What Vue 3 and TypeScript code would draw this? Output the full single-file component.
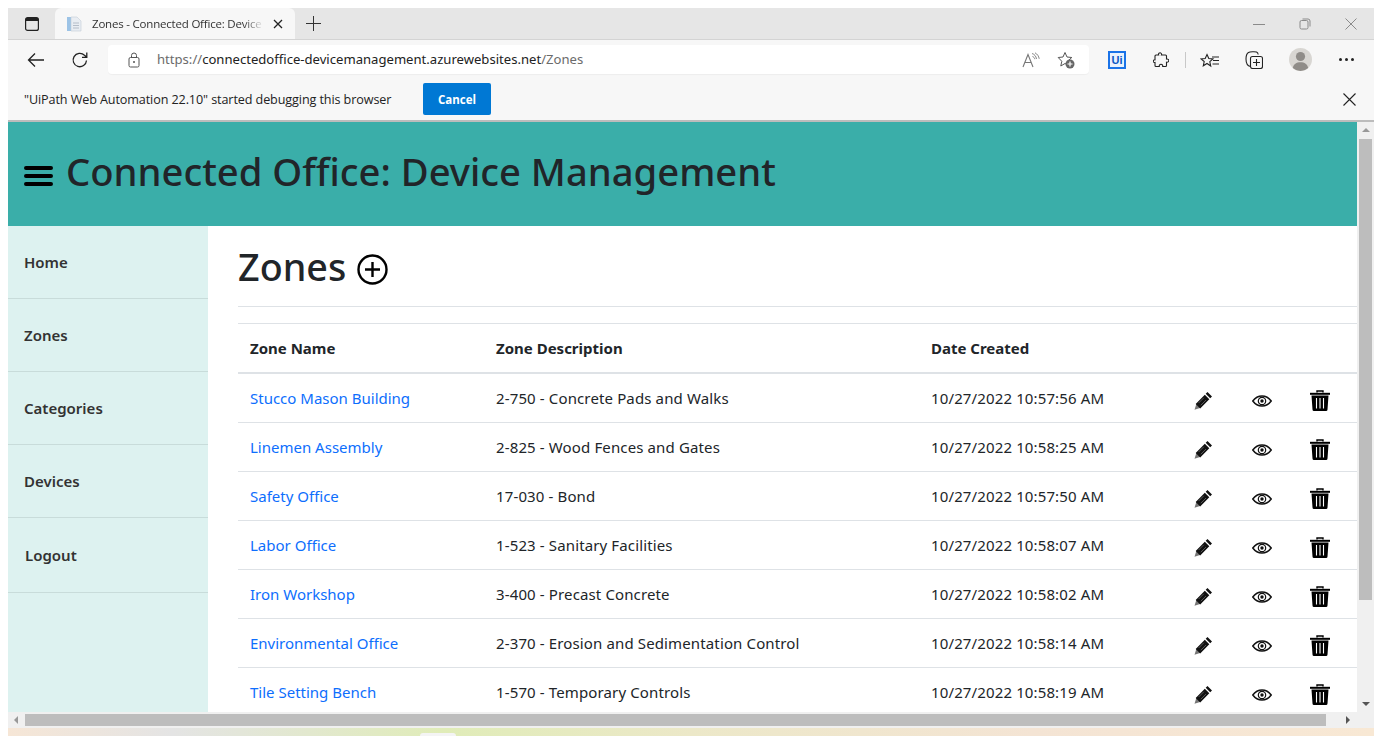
<script setup lang="ts">
interface Zone { name: string; desc: string; date: string }
const zones: Zone[] = [
  { name: 'Stucco Mason Building', desc: '2-750 - Concrete Pads and Walks', date: '10/27/2022 10:57:56 AM' },
  { name: 'Linemen Assembly', desc: '2-825 - Wood Fences and Gates', date: '10/27/2022 10:58:25 AM' },
  { name: 'Safety Office', desc: '17-030 - Bond', date: '10/27/2022 10:57:50 AM' },
  { name: 'Labor Office', desc: '1-523 - Sanitary Facilities', date: '10/27/2022 10:58:07 AM' },
  { name: 'Iron Workshop', desc: '3-400 - Precast Concrete', date: '10/27/2022 10:58:02 AM' },
  { name: 'Environmental Office', desc: '2-370 - Erosion and Sedimentation Control', date: '10/27/2022 10:58:14 AM' },
  { name: 'Tile Setting Bench', desc: '1-570 - Temporary Controls', date: '10/27/2022 10:58:19 AM' },
]
const nav: string[] = ['Home', 'Zones', 'Categories', 'Devices']
</script>

<template>
  <div class="frame">
    <div class="window">
      <div class="tabstrip">
        <svg class="tabs-ico" width="14" height="14" viewBox="0 0 14 14"><rect x="0.6" y="0.6" width="12.8" height="12.8" rx="2" fill="none" stroke="#222" stroke-width="1.2"/><path d="M1 1h12v3H1z" fill="#222"/></svg>
        <div class="tab">
          <svg class="favicon" width="16" height="16" viewBox="0 0 16 16"><rect x="1" y="1" width="4" height="14" fill="#9cc3e6"/><path d="M5 1h6l4 4v10H5z" fill="#e9edf2" stroke="#c4ccd6" stroke-width=".6"/><path d="M7 7h6M7 9.500h6M7 12h6" stroke="#b5bdc8"/></svg>
          <span class="tab-title">Zones - Connected Office: Device</span>
          <svg class="tab-x" width="10" height="10" viewBox="0 0 10 10"><path d="M1 1l8 8M9 1l-8 8" stroke="#222" stroke-width="1.300"/></svg>
        </div>
        <svg class="plus" width="15" height="15" viewBox="0 0 15 15"><path d="M7.500 0v15M0 7.500h15" stroke="#333" stroke-width="1"/></svg>
        <div class="winbtns">
          <div class="winbtn"><svg width="12" height="12" viewBox="0 0 12 12"><path d="M0 6.500h12" stroke="#8a8a8a"/></svg></div>
          <div class="winbtn"><svg width="12" height="12" viewBox="0 0 12 12"><rect x="1" y="2.500" width="8" height="8.500" rx="1.500" fill="none" stroke="#8a8a8a"/><path d="M3.500 1h5.500a2 2 0 0 1 2 2v5.500" fill="none" stroke="#8a8a8a"/></svg></div>
          <div class="winbtn"><svg width="12" height="12" viewBox="0 0 12 12"><path d="M.5.500l11 11M11.500.500l-11 11" stroke="#8a8a8a"/></svg></div>
        </div>
      </div>

      <div class="toolbar">
        <svg class="back" width="18" height="16" viewBox="0 0 18 16"><path d="M17 8H1.500M8 1.500L1.500 8 8 14.500" fill="none" stroke="#222" stroke-width="1.300"/></svg>
        <svg class="reload" width="18" height="18" viewBox="0 0 18 18"><path d="M15.500 9.500a6.700 6.700 0 1 1-2-5.300l2 1.800M15.800 1.500V6.300H11" fill="none" stroke="#222" stroke-width="1.300"/></svg>
        <div class="urlbox">
          <svg class="lock" width="12" height="16" viewBox="0 0 12 16"><rect x="1" y="5.500" width="10" height="9.500" rx="1.500" fill="none" stroke="#555"/><path d="M3.500 5.500V3.500a2.500 2.500 0 0 1 5 0v2" fill="none" stroke="#555"/><circle cx="6" cy="10" r="1" fill="#555"/></svg>
          <span class="url"><span class="dim">https://</span>connectedoffice-devicemanagement.azurewebsites.net<span class="dim">/Zones</span></span>
          <svg class="read" width="18" height="16" viewBox="0 0 18 16"><path d="M1 15L6 2.500 11 15M2.800 10.500h6.400" fill="none" stroke="#777" stroke-width="1.100"/><path d="M10 1.500c2.500.8 4 2.600 4.500 5.500M10.500 4.500c1.300.4 2 1.300 2.300 2.700M13 .8c2.300 1.300 3.800 3.300 4.200 6" fill="none" stroke="#777" stroke-width=".9"/></svg>
          <svg class="fav" width="18" height="18" viewBox="0 0 18 18"><path d="M8 1.500l2 4.500 4.800.500-3.600 3.200 1 4.700L8 12.500 3.800 15l1-4.700L1.200 6.500 6 6z" fill="none" stroke="#555" stroke-width="1"/><circle cx="13" cy="13" r="4.500" fill="#666"/><path d="M13 10.500v5M10.500 13h5" stroke="#fff" stroke-width="1.200"/></svg>
        </div>
        <div class="ui-badge"><span>Ui</span></div>
        <svg class="puzzle" width="16" height="16" viewBox="0 0 16 16"><path d="M6 1.200c1-.8 2.500-.3 2.600 1 0 .4 0 .6-.1.800H12.500a1 1 0 0 1 1 1v3c1.500-.3 2.300.6 2.300 1.600s-1 2-2.300 1.600v3.300a1 1 0 0 1-1 1H9.700c.3-1.500-.6-2.300-1.700-2.300s-2 .8-1.700 2.300H3a1 1 0 0 1-1-1v-3c-1.600.3-2-1-1.500-2 .3-.6 1-.8 1.500-.7V4a1 1 0 0 1 1-1h2.600c-.2-.6 0-1.400.4-1.800z" fill="none" stroke="#222" stroke-width="1.100"/></svg>
        <div class="sep"></div>
        <svg class="star" width="20" height="16" viewBox="0 0 20 16"><path d="M7 1.500l1.800 4 4.200.400-3.200 2.800.9 4.300L7 10.500 3.300 12.800l.9-4.300L1 5.900l4.200-.400z" fill="none" stroke="#222" stroke-width="1.100" transform="translate(0 1)"/><path d="M12 5h7M13 8.500h6M12.500 12h6.500" stroke="#222" stroke-width="1.100"/></svg>
        <svg class="coll" width="18" height="18" viewBox="0 0 18 18"><path d="M5.500 15.500C3 15 1 12 1 8c0-3 .8-5.500 2.500-6.500 1.500-.8 6.500-1 8-.5 1 .4 1.500 1.200 1.700 2.500" fill="none" stroke="#222" stroke-width="1.100"/><rect x="5.500" y="5.500" width="12" height="12" rx="2" fill="#f7f7f7" stroke="#222" stroke-width="1.100"/><path d="M11.500 8v7M8 11.500h7" stroke="#222" stroke-width="1.100"/></svg>
        <svg class="avatar" width="23" height="23" viewBox="0 0 23 23"><circle cx="11.500" cy="11.500" r="11.500" fill="#d8d6d2"/><circle cx="11.500" cy="8.500" r="4.600" fill="#8f8c88"/><path d="M3.800 20c.6-4 3.600-5.800 7.700-5.800s7 1.800 7.700 5.800a11.500 11.500 0 0 1-15.400 0z" fill="#8f8c88"/></svg>
        <div class="dots"><i></i><i></i><i></i></div>
      </div>

      <div class="infobar">
        <span class="info-text">"UiPath Web Automation 22.10" started debugging this browser</span>
        <button class="cancel">Cancel</button>
        <svg class="info-x" width="13" height="13" viewBox="0 0 13 13"><path d="M.5.500l12 12M12.500.500l-12 12" stroke="#222" stroke-width="1.100"/></svg>
      </div>

      <div class="viewport">
        <div class="page">
          <header class="hero">
            <svg class="burger" width="29" height="20" viewBox="0 0 29 20"><path d="M2 2h25M2 10h25M2 18h25" stroke="#000" stroke-width="4" stroke-linecap="round"/></svg>
            <h1 class="hero-title">Connected Office: Device Management</h1>
          </header>
          <div class="body">
            <aside class="side">
              <a v-for="item in nav" :key="item" class="side-item">{{ item }}</a>
              <a class="side-item logout">Logout</a>
            </aside>
            <main class="content">
              <div class="heading">
                <h2 class="h-title">Zones</h2>
                <svg class="h-plus" width="31" height="31" viewBox="0 0 31 31"><circle cx="15.500" cy="15.500" r="14" fill="none" stroke="#000" stroke-width="2.400"/><path d="M15.500 8v15M8 15.500h15" stroke="#000" stroke-width="2.400"/></svg>
              </div>
              <table class="grid">
                <colgroup>
                  <col class="c1" /><col class="c2" /><col class="c3" /><col class="c4" /><col class="c4" /><col class="c4" /><col class="c5" />
                </colgroup>
                <thead>
                  <tr><th>Zone Name</th><th>Zone Description</th><th>Date Created</th><th></th><th></th><th></th><th></th></tr>
                </thead>
                <tbody>
                  <tr v-for="z in zones" :key="z.name">
                    <td><a class="link">{{ z.name }}</a></td>
                    <td class="wide">{{ z.desc }}</td>
                    <td class="wide">{{ z.date }}</td>
                    <td class="ico">
                      <svg width="20" height="20" viewBox="0 0 20 20"><path d="M3.500 12.500L1.500 18.800l6.300-2z" fill="#777"/><path d="M14.500 1l4.500 4.500-1.800 1.800-4.500-4.500zM11.800 3.800l4.500 4.500L7.200 17.400 2.700 12.900z" fill="#111"/><path d="M10.800 6.800l-5.200 5.200M13 9l-5.200 5.200" stroke="#777" stroke-width=".7"/></svg>
                    </td>
                    <td class="ico eye">
                      <svg width="20" height="14" viewBox="0 0 20 14"><path d="M.8 7C3 4 6.200 2 10 2s7 2 9.200 5C17 10 13.800 12 10 12S3 10 .8 7z" fill="none" stroke="#111" stroke-width="1.500"/><circle cx="10" cy="7" r="3.700" fill="none" stroke="#111" stroke-width="1.200"/><circle cx="10" cy="7" r="1.700" fill="#111"/></svg>
                    </td>
                    <td class="ico">
                      <svg width="20" height="21" viewBox="0 0 20 21"><path d="M7 2.500V1h6v1.500" fill="none" stroke="#000" stroke-width="1.400"/><path d="M0 2.800h20v2H0z" fill="#000"/><path d="M1.500 5.500h17L17.500 19.500a1.500 1.500 0 0 1-1.500 1.500H4a1.500 1.500 0 0 1-1.500-1.500z" fill="#000"/><path d="M6.500 8v10.500M10 8v10.500M13.500 8v10.500" stroke="#fff" stroke-width="1.100"/></svg>
                    </td>
                    <td></td>
                  </tr>
                </tbody>
              </table>
            </main>
          </div>
        </div>
        <div class="vbar">
          <div class="arrow-up"></div>
          <div class="vthumb"></div>
          <div class="arrow-down"></div>
        </div>
      </div>

      <div class="hbar">
        <div class="arrow-left"></div>
        <div class="hthumb"></div>
        <div class="arrow-right"></div>
      </div>
    </div>
    <div class="wallpaper"><div class="wall-chip"></div></div>
  </div>
</template>

<style scoped>
.frame {
  width: 1382px;
  height: 736px;
  box-sizing: border-box;
  padding: 8px 8px 0;
  background: #fff;
  display: flex;
  flex-direction: column;
  overflow: hidden;
  font-family: "Noto Sans", "Open Sans", sans-serif;
  color: #212529;
}
.window {
  height: 720px;
  display: flex;
  flex-direction: column;
  overflow: hidden;
}
.wallpaper {
  height: 8px;
  flex: none;
  background: linear-gradient(90deg, #f6e6d6 0%, #e4e4e4 12%, #e0ecb8 32%, #ece8c8 50%, #f4e4d4 75%, #f8e8d4 100%);
  padding: 5px 0 0 412px;
  box-sizing: border-box;
}
.wall-chip { width: 36px; height: 3px; background: #f4f4f4; border-radius: 3px 3px 0 0; }

.tabstrip {
  height: 32px;
  flex: none;
  background: #e6e6e6;
  display: flex;
  align-items: center;
  border-bottom: 1px solid #d4d4d4;
  box-sizing: border-box;
}
.tabs-ico { margin-left: 17px; }
.tab {
  margin-left: 16px;
  width: 240px;
  height: 31px;
  margin-top: 0;
  background: #f7f7f7;
  border-radius: 6px 6px 0 0;
  display: flex;
  align-items: center;
  box-sizing: border-box;
  padding-left: 11px;
  font-size: 12px;
  color: #333;
}
.favicon { flex: none; }
.tab-title {
  margin-left: 10px;
  flex: none;
  white-space: nowrap;
  font-family: "Open Sans", sans-serif;
  font-size: 11.500px;
  letter-spacing: -0.2px;
  width: 172px;
  -webkit-mask-image: linear-gradient(90deg, #000 88%, transparent 100%);
  mask-image: linear-gradient(90deg, #000 88%, transparent 100%);
}
.tab-x { margin-left: 9px; flex: none; }
.plus { margin-left: 11px; }
.winbtns { margin-left: auto; display: flex; }
.winbtn { width: 46px; height: 31px; display: flex; align-items: center; justify-content: center; }

.toolbar {
  height: 40px;
  flex: none;
  background: #f7f7f7;
  display: flex;
  align-items: center;
  box-sizing: border-box;
  padding-bottom: 1px;
}
.back { margin-left: 19px; }
.reload { margin-left: 26px; }
.urlbox {
  margin-left: 19px;
  width: 981px;
  height: 29px;
  background: #fff;
  border-radius: 4px;
  display: flex;
  align-items: center;
  font-size: 14px;
  box-shadow: 0 1px 1px rgba(0, 0, 0, 0.04);
}
.lock { margin-left: 20px; flex: none; }
.url { margin-left: 17px; margin-bottom: 1px; color: #222; white-space: nowrap; width: 865px; font-size: 13.100px; flex: none; }
.dim { color: #6b6b6b; }
.read { margin-left: 0; flex: none; }
.fav { margin-left: 17px; flex: none; }
.ui-badge {
  margin-left: 19px;
  width: 18px;
  height: 18px;
  background: #1a73e8;
  padding: 2px;
  box-sizing: border-box;
  flex: none;
}
.ui-badge span {
  display: block;
  background: #e9f2fd;
  color: #0b57c4;
  font: 700 11px/14px "Liberation Sans", sans-serif;
  text-align: center;
}
.puzzle { margin-left: 27px; flex: none; }
.sep { width: 1px; height: 16px; background: #c8c8c8; margin-left: 16px; flex: none; }
.star { margin-left: 14px; flex: none; }
.coll { margin-left: 25px; flex: none; }
.avatar { margin-left: 26px; flex: none; }
.dots { display: flex; gap: 3px; margin-left: 27px; }
.dots i { width: 3px; height: 3px; border-radius: 50%; background: #222; display: block; }

.infobar {
  height: 40px;
  flex: none;
  background: #f7f7f7;
  display: flex;
  align-items: center;
  box-sizing: border-box;
  padding-bottom: 2px;
}
.info-text { margin-left: 16px; font-size: 12.600px; width: 399px; flex: none; white-space: nowrap; font-family: "Open Sans", sans-serif; letter-spacing: -0.1px; color: #222; }
.cancel {
  width: 68px;
  height: 32px;
  border: 0;
  border-radius: 2px;
  background: #0078d4;
  color: #fff;
  font: 700 11.500px "Open Sans", sans-serif;
  padding: 0;
}
.info-x { margin-left: 852px; }

.viewport {
  flex: 1;
  min-height: 0;
  display: flex;
  border-top: 2px solid #bcbcbc;
}
.page { flex: 1; min-width: 0; display: flex; flex-direction: column; overflow: hidden; background: #fff; }
.hero {
  height: 104px;
  flex: none;
  background: #3aaea9;
  display: flex;
  align-items: center;
  padding-left: 16px;
}
.burger { flex: none; margin-top: 4px; }
.hero-title {
  margin: 0 0 4px 13px;
  font-size: 38.200px;
  font-weight: 500;
  line-height: 1.2;
  white-space: nowrap;
  color: #212529;
}
.body { flex: 1; min-height: 0; display: flex; }
.side { width: 200px; flex: none; background: #ddf2f0; display: flex; flex-direction: column; }
.side-item {
  height: 73px;
  flex: none;
  box-sizing: border-box;
  border-bottom: 1px solid #c8dcda;
  padding: 25px 0 0 16px;
  font-size: 15px;
  line-height: 22px;
  font-weight: 600;
  color: #333;
}
.logout { height: 75px; padding: 26px 0 0 17px; }
.content { flex: 1; min-width: 0; padding-left: 30px; overflow: hidden; }
.heading {
  height: 81px;
  box-sizing: border-box;
  border-bottom: 1px solid #dee2e6;
  display: flex;
  align-items: center;
  gap: 11px;
}
.h-title { margin: 2px 0 0; font-size: 37.700px; font-weight: 500; line-height: 1.2; color: #212529; }
.h-plus { flex: none; margin-top: 7px; }
.grid {
  margin-top: 16px;
  width: 1119px;
  table-layout: fixed;
  border-collapse: collapse;
  font-size: 15px;
  color: #212529;
}
.c1 { width: 246px; }
.c2 { width: 435px; }
.c3 { width: 255px; }
.c4 { width: 58.500px; }
.c5 { width: 7.500px; }
.grid th {
  height: 48px;
  padding: 0 12px;
  text-align: left;
  font-weight: 700;
  border-top: 1px solid #dee2e6;
  border-bottom: 2px solid #dee2e6;
  color: #212529;
}
.grid td {
  height: 49px;
  box-sizing: border-box;
  padding: 0 12px;
  border-bottom: 1px solid #dee2e6;
  white-space: nowrap;
}
.grid td.wide { letter-spacing: 0.13px; }
.grid td.ico { text-align: center; padding: 5px 0 0; }
.grid td.ico.eye { padding-top: 3px; }
.ico svg { display: inline-block; vertical-align: middle; }
.link { color: #0d6efd; }

.vbar { width: 17px; flex: none; background: #f0f0f0; display: flex; flex-direction: column; align-items: center; }
.vthumb { width: 13px; height: 461px; margin-top: 7px; background: #bdbdbd; }
.arrow-up { margin-top: 6px; width: 0; height: 0; border: 4px solid transparent; border-top: 0; border-bottom: 4px solid #999; }
.arrow-down { margin-top: auto; margin-bottom: 6px; width: 0; height: 0; border: 4px solid transparent; border-bottom: 0; border-top: 4px solid #555; }
.hbar { height: 16px; flex: none; background: #f0f0f0; display: flex; align-items: center; }
.arrow-left { margin-left: 6px; width: 0; height: 0; border: 4px solid transparent; border-left: 0; border-right: 4px solid #999; }
.hthumb { margin-left: 7px; width: 1301px; height: 12px; background: #bdbdbd; }
.arrow-right { margin-left: 20px; width: 0; height: 0; border: 4px solid transparent; border-right: 0; border-left: 4px solid #555; }
</style>
